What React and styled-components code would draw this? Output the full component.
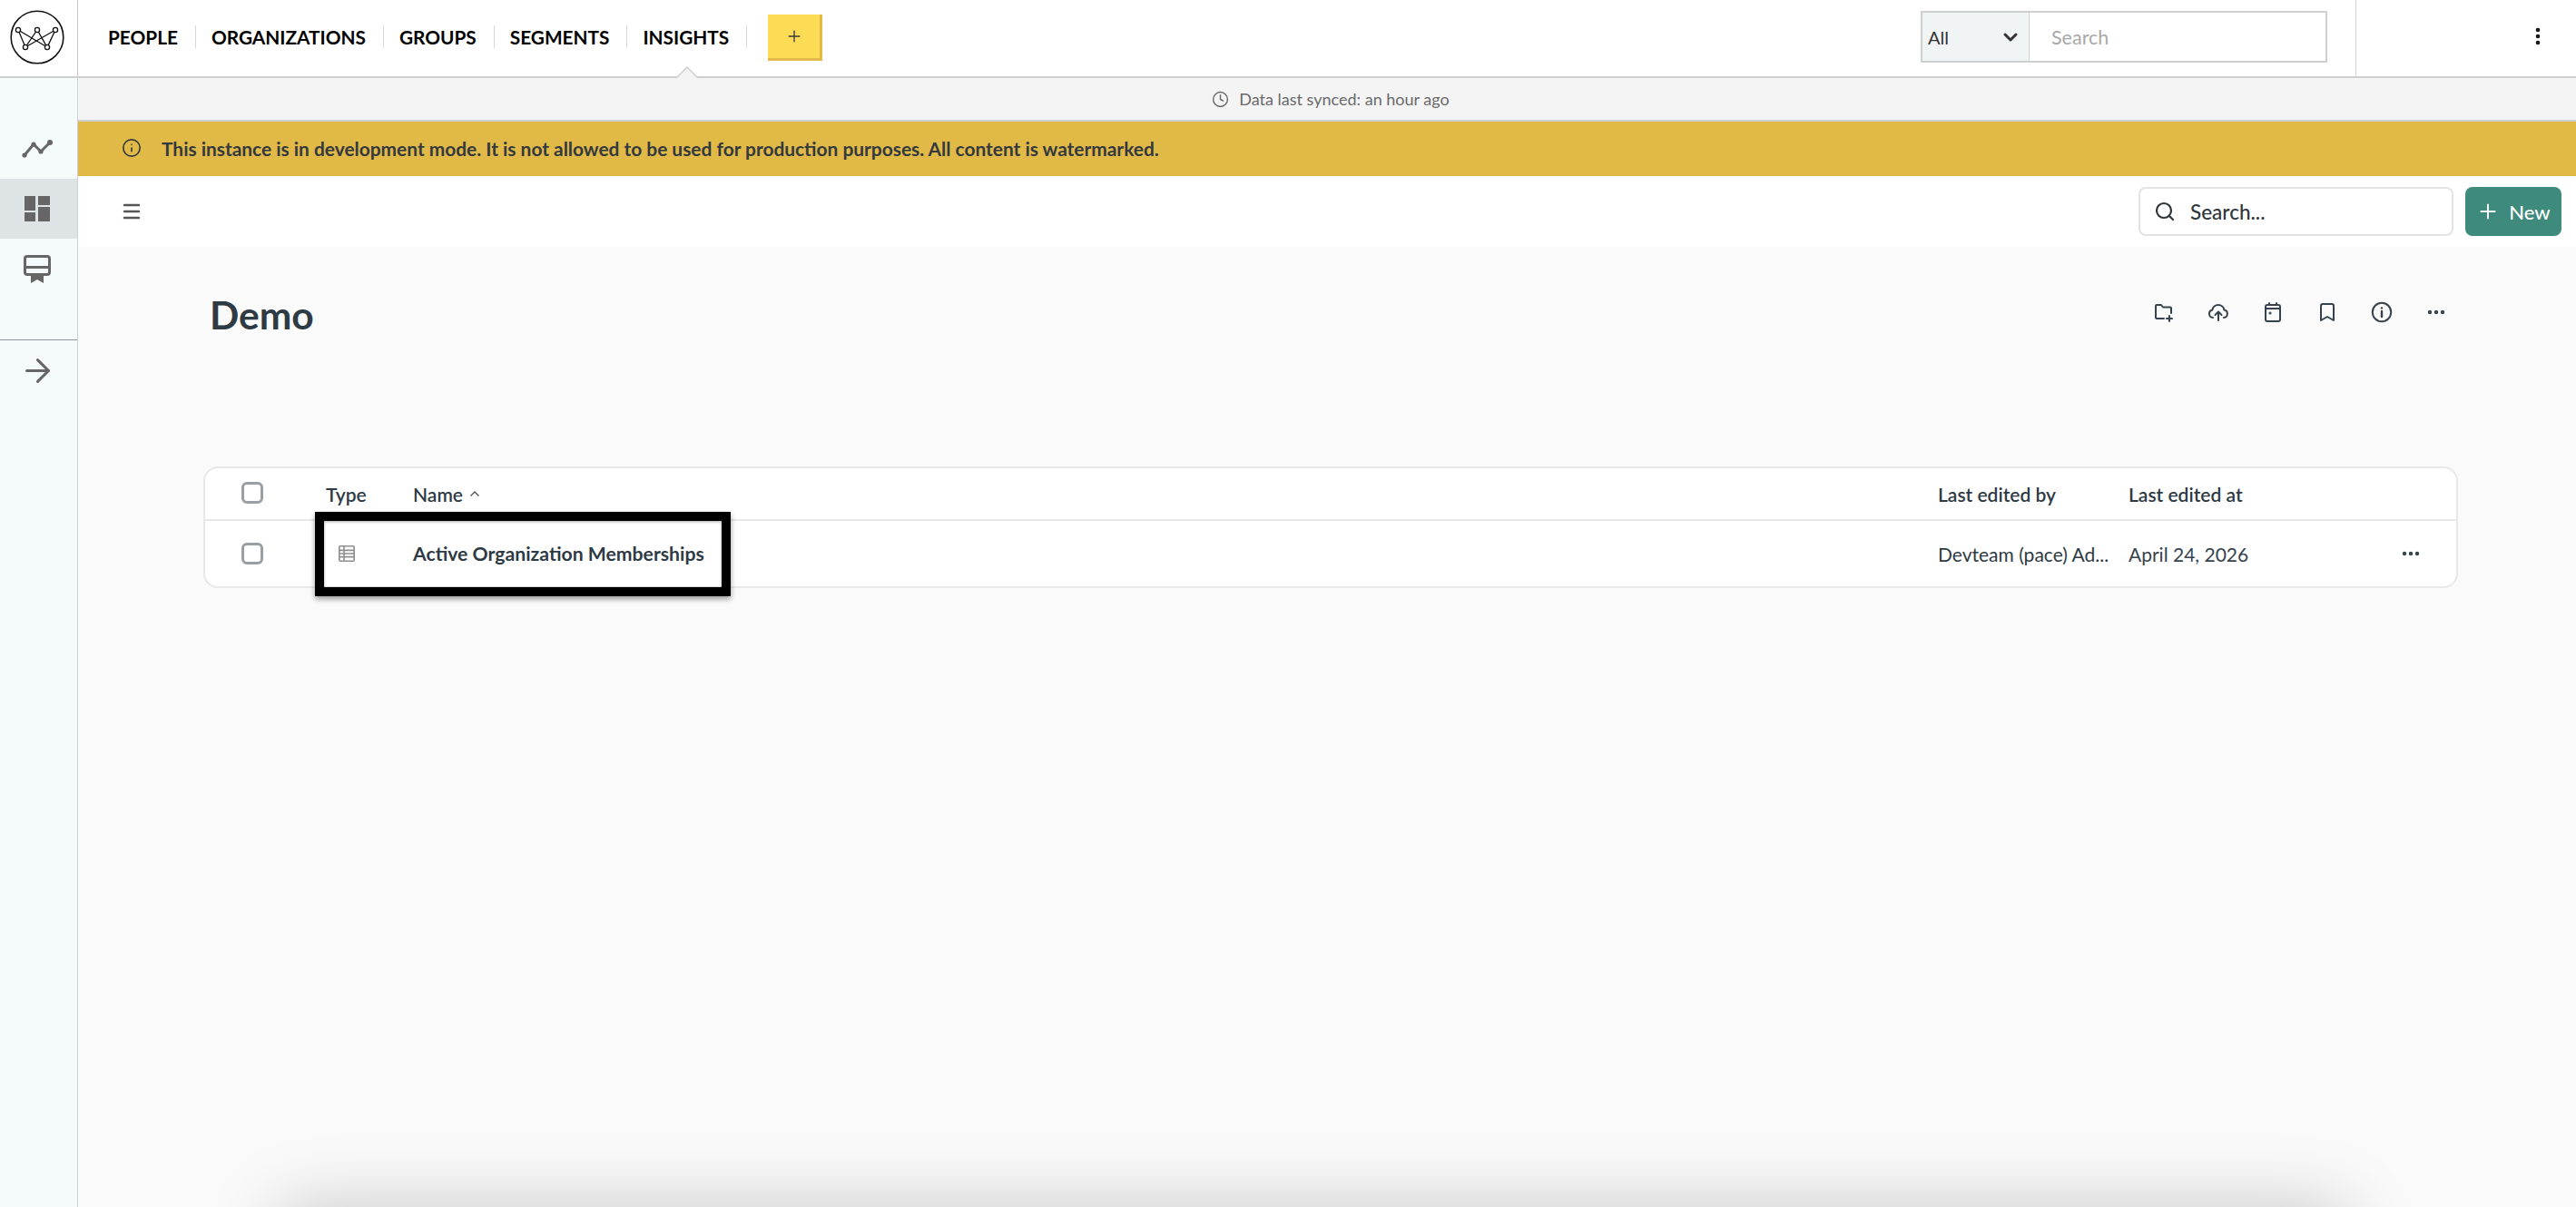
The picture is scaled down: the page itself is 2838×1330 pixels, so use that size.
import React from "react";
import styled, { createGlobalStyle } from "styled-components";
import { Search as SearchIcon, Plus, Info, Clock, ChevronDown, Ellipsis, EllipsisVertical, Menu, ArrowRight, Bookmark } from "lucide-react";

const GlobalStyle = createGlobalStyle`
  html, body { margin: 0; padding: 0; height: 100%; overflow: hidden; }
  body { font-family: "Lato", "Liberation Sans", sans-serif; background: #fafafa; color: #2e353b; }
  * { box-sizing: border-box; }
`;

const Page = styled.div`
  height: 1330px;
  display: flex;
  flex-direction: column;
  position: relative;
  overflow: hidden;
`;

const Header = styled.header`
  height: 86px;
  flex: none;
  display: flex;
  align-items: stretch;
  background: #fff;
  border-bottom: 2px solid #cfcfcf;
  position: relative;
`;

const LogoCell = styled.div`
  width: 86px;
  flex: none;
  display: flex;
  align-items: center;
  justify-content: center;
  padding: 0 4px 2px 0;
  border-right: 1px solid #c8c8c8;
`;

const Nav = styled.nav`
  display: flex;
  align-items: center;
  padding: 0 0 3px 16px;
`;

const NavItem = styled.a`
  height: 25px;
  display: flex;
  align-items: center;
  padding: 0 19px 0 17px;
  border-right: 1px solid #d8d8d8;
  font-size: 20.8px;
  font-weight: 700;
  color: #000;
  position: relative;
`;

const NavCaret = styled.svg`
  position: absolute;
  left: 50%;
  margin-left: -13px;
  top: 45px;
`;

const AddButton = styled.button`
  width: 60px;
  height: 51px;
  margin-left: 23px;
  margin-top: 2px;
  display: flex;
  align-items: center;
  justify-content: center;
  background: #fcdc55;
  border: 0;
  border-right: 3px solid #e2b94a;
  border-bottom: 3px solid #e2b94a;
  color: #3b3b3b;
  padding: 0;
`;

const HeaderRight = styled.div`
  margin-left: auto;
  display: flex;
  align-items: center;
`;

const GlobalSearch = styled.div`
  width: 448px;
  height: 57px;
  margin-top: -3px;
  display: flex;
  border: 2px solid #cfcfcf;
  background: #fff;
`;

const ScopeSelect = styled.div`
  width: 118px;
  display: flex;
  align-items: center;
  justify-content: space-between;
  padding: 0 8px 0 6px;
  background: #f0f4f5;
  border-right: 1px solid #cfcfcf;
  font-size: 20px;
  color: #333;
`;

const GlobalInput = styled.input`
  flex: 1;
  min-width: 0;
  border: 0;
  outline: 0;
  padding: 0 0 0 24px;
  background: transparent;
  font: 400 21.5px "Lato", sans-serif;
  &::placeholder { color: #a8a8a8; opacity: 1; }
`;

const MoreCell = styled.div`
  width: 243px;
  height: 84px;
  margin-left: 31px;
  display: flex;
  align-items: center;
  justify-content: flex-end;
  padding: 0 30px 4px 0;
  border-left: 1px solid #d8d8d8;
  color: #111;
`;

const Body = styled.div`
  flex: 1;
  min-height: 0;
  display: flex;
`;

const Sidebar = styled.aside`
  width: 86px;
  flex: none;
  padding-top: 45px;
  background: #f5fbfb;
  border-right: 1px solid #c9d2dc;
`;

const RailItem = styled.div`
  height: 66px;
  display: flex;
  align-items: center;
  justify-content: center;
  padding-right: 3px;
  color: #666;
  background: ${(p) => (p.$active ? "#dee3e6" : "transparent")};
`;

const RailDivider = styled.div`
  height: 1px;
  margin-top: 45px;
  background: #8f979e;
`;

const Main = styled.main`
  flex: 1;
  min-width: 0;
  display: flex;
  flex-direction: column;
`;

const SyncBar = styled.div`
  height: 48px;
  flex: none;
  display: flex;
  align-items: center;
  justify-content: center;
  gap: 11px;
  padding-left: 8px;
  background: #f4f4f4;
  border-bottom: 2px solid #cfcfcf;
  font-size: 18px;
  color: #6a6a6a;
`;

const DevBanner = styled.div`
  height: 60px;
  flex: none;
  display: flex;
  align-items: center;
  gap: 22px;
  padding: 0 0 2px 48px;
  background: #e1b947;
  font-size: 20.9px;
  font-weight: 700;
  color: #33393e;
`;

const Toolbar = styled.div`
  height: 78px;
  flex: none;
  display: flex;
  align-items: center;
  justify-content: space-between;
  padding: 0 16px 0 47px;
  background: #fff;
  color: #555;
`;

const ToolbarRight = styled.div`
  display: flex;
  align-items: center;
  gap: 13px;
`;

const SearchField = styled.div`
  width: 347px;
  height: 54px;
  display: flex;
  align-items: center;
  gap: 16px;
  padding-left: 15px;
  background: #fff;
  border: 2px solid #e3e3e3;
  border-radius: 8px;
  font-size: 22.5px;
  font-weight: 500;
  color: #2e353b;
`;

const NewButton = styled.button`
  width: 106px;
  height: 54px;
  display: flex;
  align-items: center;
  justify-content: center;
  gap: 10px;
  background: #3e8a7c;
  color: #fff;
  border: 0;
  border-radius: 8px;
  font: 500 22px "Lato", sans-serif;
  padding: 0;
`;

const Content = styled.div`
  flex: 1;
  padding: 42px 130px 0 138px;
`;

const TitleRow = styled.div`
  height: 60px;
  display: flex;
  justify-content: space-between;
  align-items: center;
  padding: 0 12px 0 7px;
`;

const Title = styled.h1`
  margin: 4px 0 0;
  font-size: 42.5px;
  font-weight: 700;
  color: #2e3a44;
`;

const TitleActions = styled.div`
  display: flex;
  align-items: center;
  gap: 36px;
  color: #36434e;
`;

const TableCard = styled.div`
  margin-top: 140px;
  position: relative;
  background: #fff;
  border: 2px solid #e8e8e8;
  border-radius: 16px;
`;

const Row = styled.div`
  display: grid;
  grid-template-columns: 133px 96px 1680px 210px 1fr;
  align-items: center;
  height: ${(p) => (p.$head ? "58px" : "72px")};
  font-size: 21px;
  font-weight: ${(p) => (p.$head ? 600 : 400)};
  color: #2e3a44;
  border-bottom: ${(p) => (p.$head ? "2px solid #e8e8e8" : "0")};
`;

const CheckCell = styled.div`
  padding-left: 40px;
  display: flex;
`;

const Checkbox = styled.span`
  width: 24px;
  height: 24px;
  border: 3px solid #999fa3;
  border-radius: 6px;
  background: #fff;
  margin-top: ${(p) => (p.$up ? "-2px" : "-1px")};
`;

const NameHead = styled.div`
  display: flex;
  align-items: center;
  gap: 7px;
`;

const TypeCell = styled.div`
  padding-left: 14px;
  display: flex;
  color: #8f8f8f;
`;

const ItemName = styled.div`
  font-size: 21.2px;
  font-weight: 700;
`;

const EditorCell = styled.div`
  white-space: nowrap;
`;

const DateActions = styled.div`
  display: flex;
  justify-content: space-between;
  padding-right: 38px;
  color: #36434e;
`;

const CalloutBox = styled.div`
  position: absolute;
  left: 121px;
  top: 48px;
  width: 458px;
  height: 93px;
  border: 10px solid #000;
  box-shadow: 0 3px 6px rgba(0, 0, 0, 0.4), inset 0 1px 3px rgba(0, 0, 0, 0.35);
  pointer-events: none;
`;

const BottomGlow = styled.div`
  position: absolute;
  left: 316px;
  right: 262px;
  top: 1340px;
  height: 60px;
  box-shadow: 0 0 80px 8px rgba(0, 0, 0, 0.22);
`;

const Logo = () => (
  <svg width="60" height="60" viewBox="0 0 60 60" fill="none" stroke="#111" strokeWidth="1.3">
    <circle cx="30" cy="30" r="28.8" strokeWidth="1.6" />
    <path d="M9 22 L17 41 L30 22 L41 41 L50 22 L17 41 M9 22 L41 41" />
    <circle cx="9" cy="22" r="2.6" fill="#fff" />
    <circle cx="30" cy="22" r="2.6" fill="#fff" />
    <circle cx="50" cy="22" r="2.6" fill="#fff" />
    <circle cx="17" cy="41" r="2.6" fill="#fff" />
    <circle cx="41" cy="41" r="2.6" fill="#fff" />
  </svg>
);

const TrendIcon = () => (
  <svg width="36" height="22" viewBox="0 0 36 22" fill="none" stroke="currentColor" strokeWidth="3">
    <path d="M4 18 L14 6 L22 14 L32 4" />
    <circle cx="4" cy="18" r="2.6" fill="currentColor" stroke="none" />
    <circle cx="14" cy="6" r="2.6" fill="currentColor" stroke="none" />
    <circle cx="22" cy="14" r="2.6" fill="currentColor" stroke="none" />
    <circle cx="32" cy="4" r="3" fill="currentColor" stroke="none" />
  </svg>
);

const DashboardIcon = () => (
  <svg width="28" height="28" viewBox="0 0 28 28" fill="currentColor">
    <rect x="0" y="0" width="12" height="16" />
    <rect x="0" y="18" width="12" height="10" />
    <rect x="15" y="0" width="13" height="10" />
    <rect x="15" y="12" width="13" height="16" />
  </svg>
);

const CertificateIcon = () => (
  <svg width="30" height="31" viewBox="0 0 30 31" fill="none">
    <rect x="1.5" y="1.5" width="27" height="20" rx="2.5" stroke="currentColor" strokeWidth="3" />
    <rect x="2" y="12" width="26" height="3" fill="currentColor" />
    <path d="M8 22 H22 V31 L15 27 L8 31 Z" fill="currentColor" />
    <rect x="4" y="15" width="22" height="3" fill="#f5fbfb" />
  </svg>
);

const FolderPlusIcon = () => (
  <svg width="24" height="24" viewBox="0 0 24 24" fill="none" stroke="currentColor" strokeWidth="2" strokeLinecap="round" strokeLinejoin="round">
    <path d="M12 19H4a1 1 0 0 1-1-1V5a1 1 0 0 1 1-1h5l2 2.5h8a1 1 0 0 1 1 1V13" />
    <path d="M18 16v6M15 19h6" />
  </svg>
);

const CloudUpIcon = () => (
  <svg width="24" height="24" viewBox="0 0 24 24" fill="none" stroke="currentColor" strokeWidth="2" strokeLinecap="round" strokeLinejoin="round">
    <path d="M6 18a4.3 4.3 0 0 1-.6-8.5 6.6 6.6 0 0 1 13 0A4.3 4.3 0 0 1 18 18" />
    <path d="M12 21v-9M8.5 15l3.5-3.5 3.5 3.5" />
  </svg>
);

const CalendarIcon = () => (
  <svg width="24" height="24" viewBox="0 0 24 24" fill="none" stroke="currentColor" strokeWidth="2" strokeLinecap="round" strokeLinejoin="round">
    <rect x="4" y="4" width="16" height="18" rx="2" />
    <path d="M8 2v2M16 2v2M4 8h16" />
    <circle cx="9" cy="13" r="0.6" />
  </svg>
);

const InfoIcon = () => (
  <svg width="24" height="24" viewBox="0 0 24 24" fill="none" stroke="currentColor" strokeWidth="2" strokeLinecap="round">
    <circle cx="12" cy="12" r="10.2" />
    <path d="M12 11v6" strokeWidth="2.4" />
    <circle cx="12" cy="7.4" r="1.2" fill="currentColor" stroke="none" />
  </svg>
);

const TableIcon = () => (
  <svg width="18" height="18" viewBox="0 0 18 18" fill="none" stroke="currentColor" strokeWidth="1.6">
    <rect x="0.8" y="0.8" width="16.4" height="16.4" rx="1" />
    <path d="M1 5.4h16M1 9h16M1 12.6h16M6 1v16" />
  </svg>
);

const SortCaret = () => (
  <svg width="12" height="8" viewBox="0 0 12 8" fill="none" stroke="#555" strokeWidth="1.4">
    <path d="M1.5 6.5 L6 2 L10.5 6.5" />
  </svg>
);

export default function App() {
  return (
    <Page>
      <GlobalStyle />
      <Header>
        <LogoCell>
          <Logo />
        </LogoCell>
        <Nav>
          <NavItem>PEOPLE</NavItem>
          <NavItem>ORGANIZATIONS</NavItem>
          <NavItem>GROUPS</NavItem>
          <NavItem>SEGMENTS</NavItem>
          <NavItem>
            INSIGHTS
            <NavCaret width="26" height="14" viewBox="0 0 26 14">
              <path d="M1 13 L13 1 L25 13" fill="#f4f4f4" stroke="#cfcfcf" strokeWidth="1.5" />
            </NavCaret>
          </NavItem>
          <AddButton>
            <Plus size={20} strokeWidth={1.6} />
          </AddButton>
        </Nav>
        <HeaderRight>
          <GlobalSearch>
            <ScopeSelect>
              All
              <ChevronDown size={24} strokeWidth={3} color="#333" />
            </ScopeSelect>
            <GlobalInput placeholder="Search" />
          </GlobalSearch>
          <MoreCell>
            <EllipsisVertical size={24} strokeWidth={2.6} />
          </MoreCell>
        </HeaderRight>
      </Header>

      <Body>
        <Sidebar>
          <RailItem>
            <TrendIcon />
          </RailItem>
          <RailItem $active>
            <DashboardIcon />
          </RailItem>
          <RailItem>
            <CertificateIcon />
          </RailItem>
          <RailDivider />
          <RailItem>
            <ArrowRight size={41} strokeWidth={1.8} />
          </RailItem>
        </Sidebar>

        <Main>
          <SyncBar>
            <Clock size={19} strokeWidth={1.8} />
            Data last synced: an hour ago
          </SyncBar>
          <DevBanner>
            <Info size={22} strokeWidth={1.8} />
            This instance is in development mode. It is not allowed to be used for production purposes. All content is watermarked.
          </DevBanner>
          <Toolbar>
            <Menu size={24} strokeWidth={2.4} />
            <ToolbarRight>
              <SearchField>
                <SearchIcon size={24} strokeWidth={2.2} />
                Search...
              </SearchField>
              <NewButton>
                <Plus size={26} strokeWidth={1.8} />
                New
              </NewButton>
            </ToolbarRight>
          </Toolbar>
          <Content>
            <TitleRow>
              <Title>Demo</Title>
              <TitleActions>
                <FolderPlusIcon />
                <CloudUpIcon />
                <CalendarIcon />
                <Bookmark size={24} strokeWidth={2} />
                <InfoIcon />
                <Ellipsis size={24} strokeWidth={2.4} />
              </TitleActions>
            </TitleRow>
            <TableCard>
              <Row $head>
                <CheckCell>
                  <Checkbox $up />
                </CheckCell>
                <div>Type</div>
                <NameHead>
                  Name
                  <SortCaret />
                </NameHead>
                <div>Last edited by</div>
                <div>Last edited at</div>
              </Row>
              <Row>
                <CheckCell>
                  <Checkbox />
                </CheckCell>
                <TypeCell>
                  <TableIcon />
                </TypeCell>
                <ItemName>Active Organization Memberships</ItemName>
                <EditorCell>Devteam (pace) Ad...</EditorCell>
                <DateActions>
                  <span>April 24, 2026</span>
                  <Ellipsis size={24} strokeWidth={2.4} />
                </DateActions>
              </Row>
              <CalloutBox />
            </TableCard>
          </Content>
        </Main>
      </Body>
      <BottomGlow />
    </Page>
  );
}
